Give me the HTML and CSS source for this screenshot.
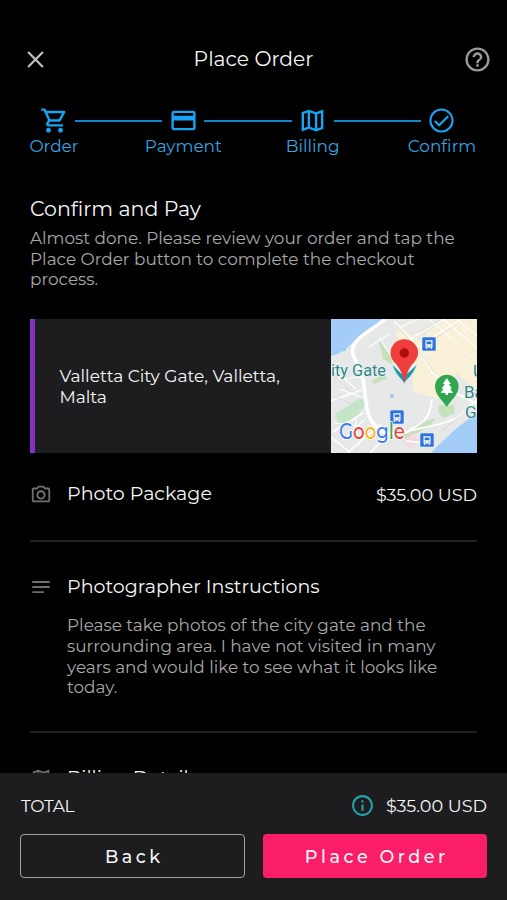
FILE: index.html
```html
<!DOCTYPE html>
<html lang="en">
<head>
<meta charset="utf-8">
<title>Place Order</title>
<link rel="stylesheet" href="styles.css">
</head>
<body>
<div class="screen">
  <header class="topbar">
    <svg class="close" viewBox="0 0 16 16"><path d="M1 1 15 15M15 1 1 15"/></svg>
    <h1 class="title">Place Order</h1>
    <svg class="help" viewBox="0 0 24 24"><path d="M11 18h2v-2h-2v2zm1-16C6.480 2 2 6.480 2 12s4.480 10 10 10 10-4.480 10-10S17.520 2 12 2zm0 18c-4.410 0-8-3.590-8-8s3.590-8 8-8 8 3.590 8 8-3.590 8-8 8zm0-14c-2.210 0-4 1.790-4 4h2c0-1.100.9-2 2-2s2 .9 2 2c0 2-3 1.750-3 5h2c0-2.250 3-2.500 3-5 0-2.210-1.790-4-4-4z"/></svg>
  </header>

  <nav class="steps">
    <div class="step">
      <svg viewBox="0 0 24 24"><path d="M15.550 13c.75 0 1.410-.41 1.750-1.030l3.580-6.490A.996.996 0 0 0 20.010 4H5.210l-.94-2H1v2h2l3.600 7.590-1.350 2.440C4.520 15.370 5.480 17 7 17h12v-2H7l1.100-2h7.450zM6.160 6h12.150l-2.760 5H8.530L6.160 6zM7 18c-1.100 0-1.990.9-1.990 2S5.900 22 7 22s2-.9 2-2-.9-2-2-2zm10 0c-1.100 0-1.990.9-1.990 2s.89 2 1.990 2 2-.9 2-2-.9-2-2-2z"/></svg>
      <span>Order</span>
    </div>
    <div class="line"></div>
    <div class="step">
      <svg viewBox="0 0 24 24"><path d="M20 4H4c-1.110 0-1.990.89-1.990 2L2 18c0 1.110.89 2 2 2h16c1.110 0 2-.89 2-2V6c0-1.110-.89-2-2-2zm0 14.300H4V12h16v6.300zm0-10.300H4V5.700h16V8z"/></svg>
      <span>Payment</span>
    </div>
    <div class="line"></div>
    <div class="step">
      <svg viewBox="0 0 24 24"><path d="M20.500 3l-.16.030L15 5.100 9 3 3.360 4.900c-.21.070-.36.250-.36.480V20.500c0 .28.220.5.500.5l.16-.03L9 18.900l6 2.100 5.640-1.900c.21-.07.360-.25.360-.48V3.500c0-.28-.22-.5-.5-.5zM10 5.470l4 1.400v11.660l-4-1.400V5.470zm-5 .99l3-1.010v11.700l-3 1.160V6.460zm14 11.080l-3 1.010V6.860l3-1.160v11.840z"/></svg>
      <span>Billing</span>
    </div>
    <div class="line"></div>
    <div class="step">
      <svg viewBox="0 0 24 24"><path d="M12 2C6.480 2 2 6.480 2 12s4.480 10 10 10 10-4.480 10-10S17.520 2 12 2zm0 18.300a8.300 8.300 0 1 1 0-16.600 8.300 8.300 0 0 1 0 16.600zm4.900-12.500L10 14.700l-2.900-2.900-1.300 1.300L10 17.200l8.200-8.100z"/></svg>
      <span>Confirm</span>
    </div>
  </nav>

  <main class="content">
    <h2 class="heading">Confirm and Pay</h2>
    <p class="body intro">Almost done. Please review your order and tap the<br>Place Order button to complete the checkout<br>process.</p>

    <section class="place">
      <p class="address">Valletta City Gate, Valletta,<br>Malta</p>
      <svg class="map" viewBox="0 0 146 134">
        <defs>
          <g id="bus">
            <rect width="14" height="14" rx="1.500" fill="#2f73dc" stroke="#e9f1fb" stroke-width=".6"/>
            <path d="M3.500 3.200h7v7.300H9.800V12H8.700v-1.500H5.300V12H4.200v-1.500h-.7z" fill="#fff"/>
            <path d="M4.600 4.600h4.800v2.700H4.600zM4.700 8.500h1.200v1H4.700zM8.100 8.500h1.200v1H8.100z" fill="#2f73dc"/>
          </g>
        </defs>
        <rect width="146" height="134" fill="#e7e8e8"/>
        <path d="M0 0H52C45 12 28 17 20 25 14 32 8 35 0 37Z" fill="#a3cdf8"/>
        <path d="M146 94C126 108 113 120 100 134H146Z" fill="#a3cdf8"/>
        <path d="M79 0H146V73L126 54 108 80 82 73 80 46 64 13Z" fill="#f8f0d7"/>
        <path d="M79 0H112L88 22 76 14 66 12Z" fill="#eceae4"/>
        <path d="M4 95 31 78 34 86 25 99 7 106Z" fill="#c5e5c8"/>
        <path d="M47 20 59 35 62 46 52 40ZM40 62 53 55 56 60 43 65ZM70 112 92 103 105 99 98 108 74 120ZM108 86 123 86 124 94 113 99 107 93Z" fill="#c6e2bd"/>
        <path d="M72 122 82 114 88 122 80 130Z" fill="#f4d9dc"/>
        <g fill="none" stroke="#fff">
          <path d="M54 0C42 11 25 17 22 29 19 38 31 48 33 65 35 82 35 99 45 107 54 118 65 115 78 112" stroke-width="3.500"/>
          <path d="M78 112C93 108 114 106 127 98L146 81M78 110C98 104 99 92 101 80" stroke-width="2"/>
          <path d="M63 2 79 19 101 53 125 74 146 85M62 111 39 134M75 122 102 125M0 48 25 70M0 82 31 71M2 113 32 94M16 134 50 105M0 118 20 134" stroke-width="1.600"/>
          <path d="M68 9 87 0M79 20 113 0M85 29 130 0M112 0 146 29M126 0 146 17M98 0 120 19M48 19 65 44M38 28 58 15M6 60 31 58M9 70 32 79M3 104 30 107M24 98 28 126M33 101 12 121" stroke-width="1.100"/>
          <path d="M91 38 146 4M107 58 146 34M120 19 146 44" stroke-width=".8" opacity=".7"/>
        </g>
        <g fill="none" stroke="#cdd2d6" stroke-width=".6"><path d="M65 5 84 27 105 56M88 13 110 1M95 25 122 8M0 54 20 73M6 79 28 88M110 113 135 91"/></g>
        <path d="M2 31h4v4H2zM12 28h3v4h-3z" fill="#9bc8f7"/>
        <circle cx="61" cy="77" r="2" fill="#9ac4f3"/>
        <use href="#bus" x="91" y="18"/><use href="#bus" x="59" y="91"/><use href="#bus" x="89" y="114"/>
        <g class="maplabel">
          <text x="0" y="57" textLength="55" lengthAdjust="spacingAndGlyphs">ity Gate</text>
          <text x="142" y="58">U</text><text x="133" y="79">Ba</text><text x="134" y="99">G</text>
        </g>
        <path d="M61 45C63 53 69 59 73 64 78 59 84 53 86 45L81 50 73 57 66 50Z" fill="#1d9baa" stroke="#e5f5f6" stroke-width=".7"/>
        <path d="M73.300 65C72 57 70 51 65 45 61 41 59.500 38 59.500 34a13.800 13.800 0 0 1 27.600 0C87.100 38 85 41 81.500 45 76.500 51 75 57 73.300 65Z" fill="#ef3e3b"/>
        <circle cx="73.300" cy="34" r="4.700" fill="#ad0d0b"/>
        <path d="M115.800 88C112 82 104 76 104 67.500a11.800 11.800 0 0 1 23.600 0C127.600 76 119 82 115.800 88Z" fill="#31a650"/>
        <path d="m115.800 59-4 6h2l-3.200 4.500h2l-3 4.500h5v2h2.400v-2h5l-3-4.500h2L117.800 65h2z" fill="#fff"/>
        <text class="google" x="8" y="120" textLength="66" lengthAdjust="spacingAndGlyphs"><tspan fill="#3f7de8">G</tspan><tspan fill="#e94235">o</tspan><tspan fill="#f7b90b">o</tspan><tspan fill="#3f7de8">g</tspan><tspan fill="#34a853">l</tspan><tspan fill="#e94235">e</tspan></text>
      </svg>
    </section>

    <section class="row package">
      <svg class="rowicon" viewBox="0 0 24 24"><path d="M20 5h-3.170L15 3H9L7.170 5H4c-1.100 0-2 .9-2 2v12c0 1.100.9 2 2 2h16c1.100 0 2-.9 2-2V7c0-1.100-.9-2-2-2zm0 14H4V7h4.050l1.830-2h4.240l1.830 2H20v12zM12 8c-2.760 0-5 2.240-5 5s2.240 5 5 5 5-2.240 5-5-2.240-5-5-5zm0 8c-1.650 0-3-1.350-3-3s1.350-3 3-3 3 1.350 3 3-1.350 3-3 3z"/></svg>
      <h3 class="rowtitle">Photo Package</h3>
      <span class="price">$35.00 USD</span>
    </section>

    <section class="row instructions">
      <svg class="rowicon" viewBox="0 0 24 24"><path d="M2.500 5.500h19v2h-19zM2.500 11h19v2h-19zM2.500 16.500h12.500v2H2.500z"/></svg>
      <h3 class="rowtitle">Photographer Instructions</h3>
      <p class="body note">Please take photos of the city gate and the<br>surrounding area. I have not visited in many<br>years and would like to see what it looks like<br>today.</p>
    </section>

    <section class="row billing">
      <svg class="rowicon" viewBox="0 0 24 24"><path d="M20.500 3l-.16.030L15 5.100 9 3 3.360 4.900c-.21.070-.36.250-.36.480V20.500c0 .28.220.5.500.5l.16-.03L9 18.900l6 2.100 5.640-1.900c.21-.07.360-.25.360-.48V3.500c0-.28-.22-.5-.5-.5zM10 5.470l4 1.400v11.660l-4-1.400V5.470zm-5 .99l3-1.010v11.700l-3 1.160V6.460zm14 11.080l-3 1.010V6.860l3-1.160v11.840z"/></svg>
      <h3 class="rowtitle">Billing Details</h3>
    </section>
  </main>

  <footer class="footer">
    <div class="total">
      <span class="total-label">TOTAL</span>
      <svg class="info" viewBox="0 0 24 24"><path d="M11 7h2v2h-2zm0 4h2v6h-2zm1-9C6.480 2 2 6.480 2 12s4.480 10 10 10 10-4.480 10-10S17.520 2 12 2zm0 18c-4.410 0-8-3.590-8-8s3.590-8 8-8 8 3.590 8 8-3.590 8-8 8z"/></svg>
      <span class="price">$35.00 USD</span>
    </div>
    <div class="actions">
      <button class="btn back">Back</button>
      <button class="btn primary">Place Order</button>
    </div>
  </footer>
</div>
</body>
</html>
```
FILE: styles.css
```css
* { box-sizing: border-box; }
body, h1, h2, h3, p { margin: 0; }
body { background: #000; color: #f6f6f6; font-family: Montserrat, Inter, "Liberation Sans", sans-serif; font-weight: 400; }
h1, h2, h3 { font-weight: 400; }
p, span { white-space: nowrap; }

.screen { width: 507px; height: 900px; display: flex; flex-direction: column; overflow: hidden; background: #000; }

.topbar { height: 104px; padding: 30px 15px 15px 27px; display: flex; align-items: center; justify-content: space-between; flex: none; }
.close { width: 17px; height: 17px; fill: none; stroke: #c2c2c2; stroke-width: 2; }
.title { font-size: 20.300px; line-height: 26px; padding-bottom: 1px; }
.help { width: 29px; height: 29px; fill: #9b9b9b; }

.steps { height: 78px; padding: 2px 50px 0 39px; display: flex; flex: none; }
.step { width: 30px; display: flex; flex-direction: column; align-items: center; color: #36a4e2; font-size: 16.900px; line-height: 23px; }
.step svg { width: 29px; height: 29px; flex: none; fill: #18a4f2; }
.line { flex: 1; height: 2px; margin: 14px 6px 0; background: #1285c8; }

.content { flex: 1; min-height: 0; overflow: hidden; padding: 13px 30px 0; }
.heading { font-size: 20.500px; line-height: 28px; }
.body { color: #a8a8a8; font-size: 16.870px; line-height: 20.700px; }
.intro { margin-top: 5px; }
.place { margin-top: 29px; height: 134px; display: flex; align-items: center; border-left: 5px solid #8431c6; background: #1d1d1f; }
.address { flex: 1; padding: 1px 0 0 24.500px; font-size: 17.050px; line-height: 20.700px; }
.map { width: 146px; height: 134px; display: block; }
.maplabel { font: 400 17px Roboto, sans-serif; fill: #2b8787; stroke: #f4f7f6; stroke-width: 1.200px; paint-order: stroke; }
.google { font: 500 23px Montserrat, "Open Sans", sans-serif; stroke: #fff; stroke-width: 1.500px; paint-order: stroke; }

.row { display: grid; grid-template-columns: 37px 1fr auto; align-items: center; border-bottom: 2px solid #20202a; }
.rowicon { width: 22px; height: 22px; fill: #6f6f6f; }
.rowtitle { font-size: 19.050px; line-height: 26px; }
.package { height: 89px; padding-bottom: 5px; }
.price { font-size: 17.600px; line-height: 22px; }
.package .price { padding-top: 2px; }
.instructions { height: 191px; padding-top: 32px; align-content: start; }
.note { grid-column: 2 / 4; margin-top: 15px; }
.billing { padding-top: 32px; border: 0; }

.footer { flex: none; height: 127px; padding: 20px 20px 0; background: #1d1d1f; }
.total { height: 25px; display: flex; align-items: center; }
.total-label { font-size: 17px; letter-spacing: -.4px; margin-right: auto; padding-left: 1px; }
.info { width: 25px; height: 25px; fill: #21a3aa; margin-right: 11px; }
.actions { margin-top: 16px; display: grid; grid-template-columns: 1fr 1fr; gap: 18px; }
.btn { height: 44px; padding: 0 0 0 4px; border-radius: 4px; font: 500 17.600px Montserrat, Inter, sans-serif; color: #f4f4f4; letter-spacing: 3.500px; }
.back { background: #1d1d1f; border: 1.500px solid #a4a4a4; }
.primary { background: #fa1e68; border: 0; }
```
